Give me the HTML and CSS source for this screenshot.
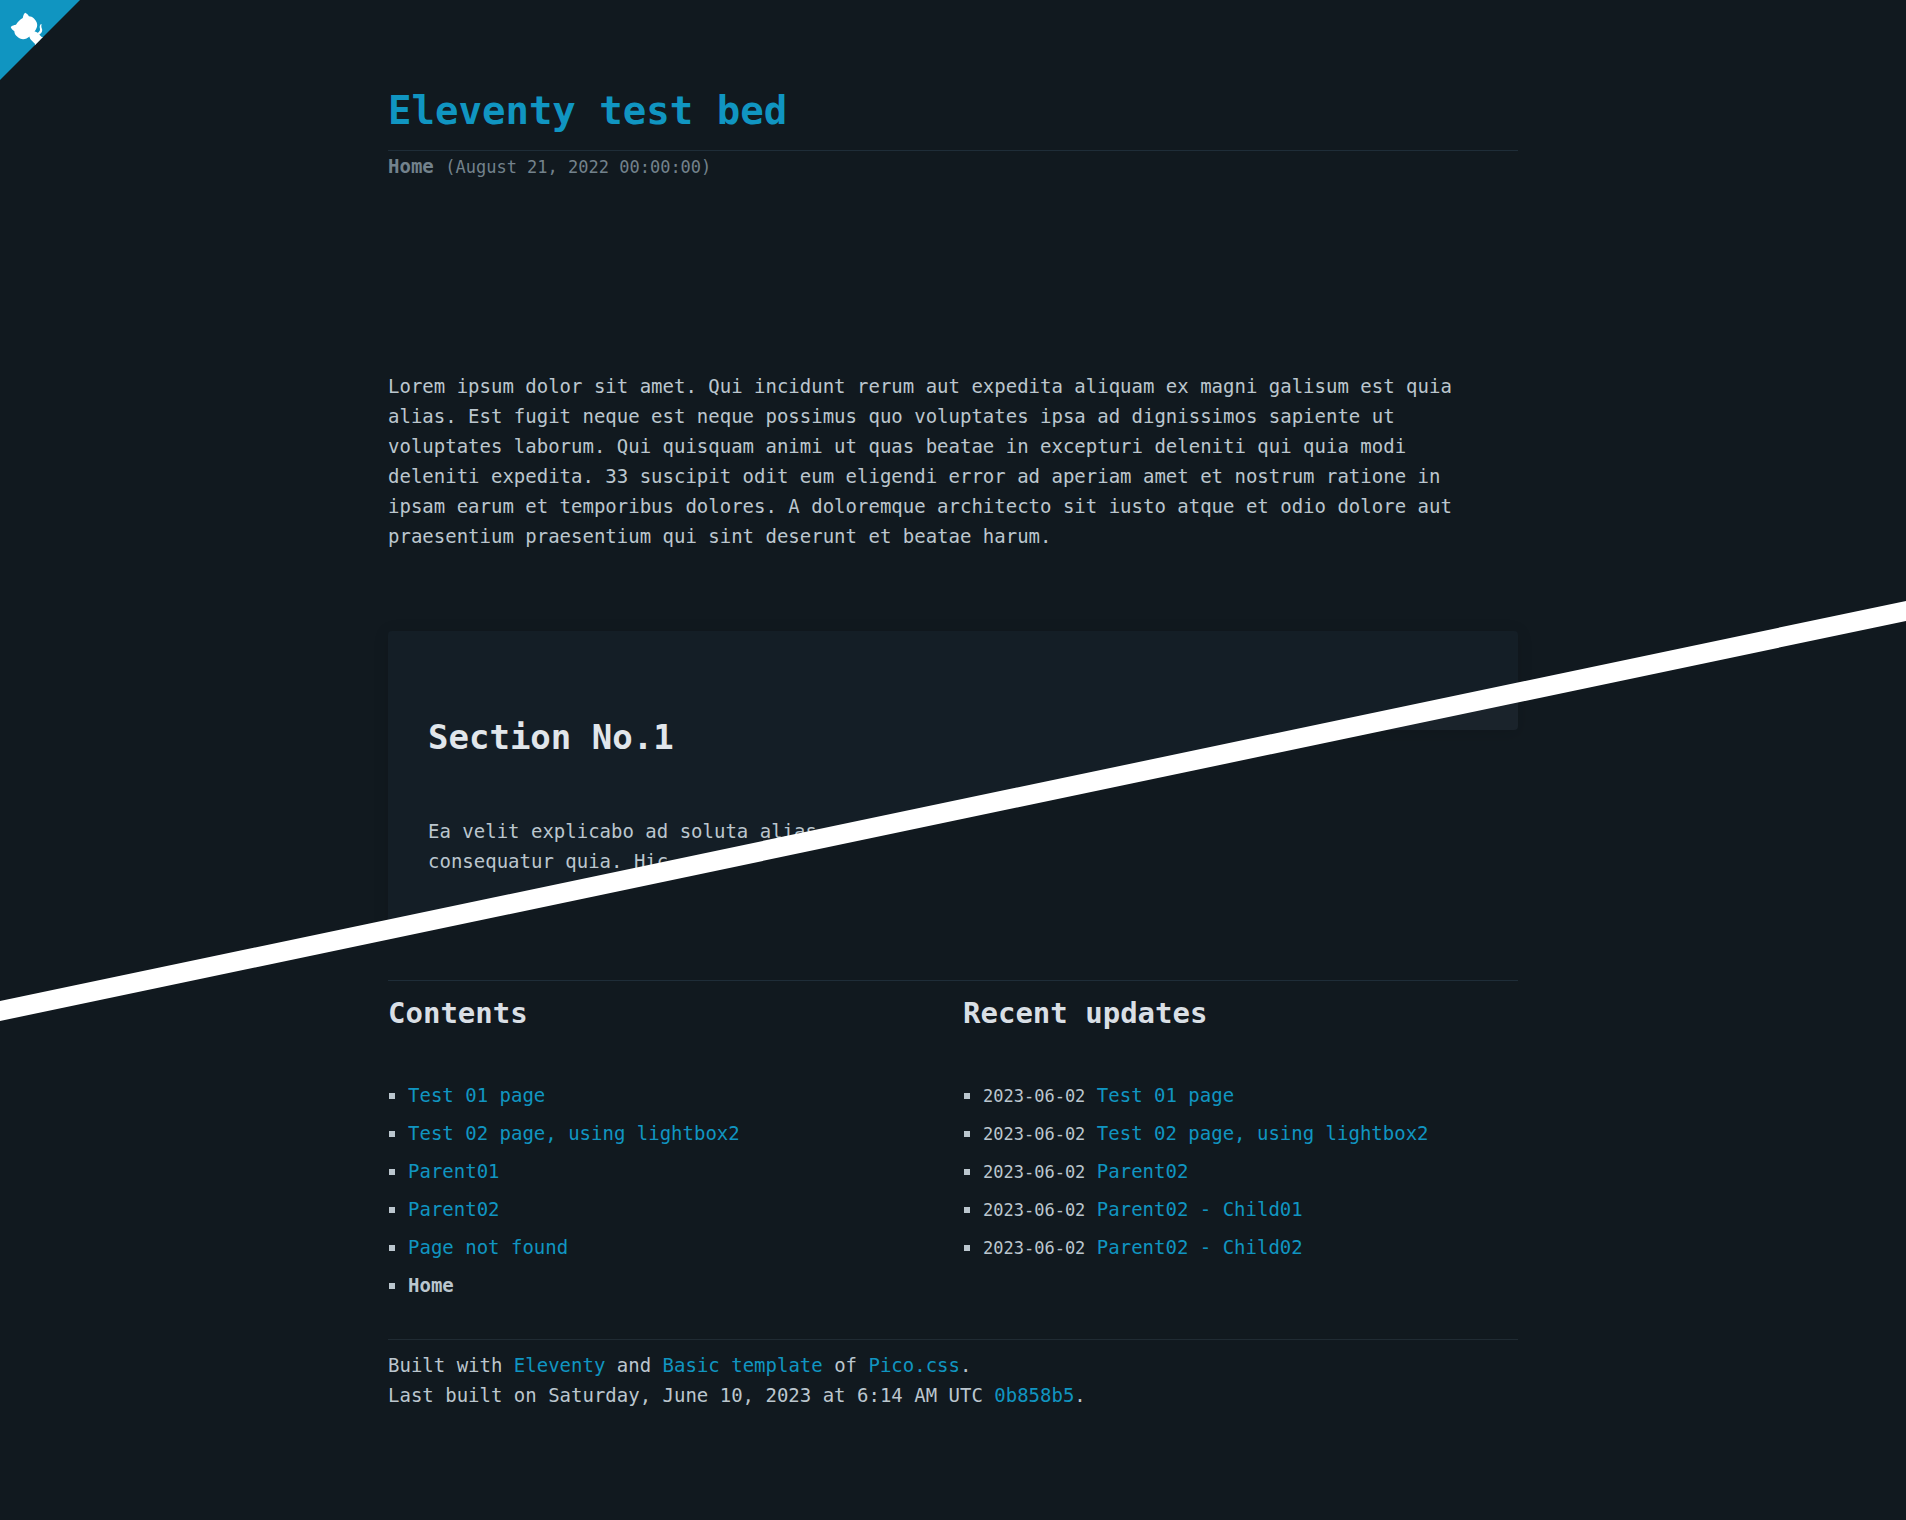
FILE: index.html
```html
<!DOCTYPE html>
<html lang="en">
<head>
<meta charset="utf-8">
<meta name="viewport" content="width=device-width, initial-scale=1">
<title>Eleventy test bed</title>
<link rel="stylesheet" href="styles.css">
</head>
<body>
<a class="corner" href="#" aria-label="View source on GitHub">
  <svg width="80" height="80" viewBox="0 0 250 250" aria-hidden="true">
    <g transform="translate(250 0) scale(-1 1)">
      <path fill="#1095c1" d="M0,0 L250,250 L250,0 Z"/>
      <path fill="#fff" d="M128.3,109.0 C113.8,99.7 119.0,89.6 119.0,89.6 C122.0,82.7 120.5,78.6 120.5,78.6 C119.2,72.0 123.4,76.3 123.4,76.3 C127.3,80.9 125.5,87.3 125.5,87.3 C122.9,97.6 130.6,101.9 134.4,103.2"/>
      <path fill="#fff" d="M115.0,115.0 C114.9,115.1 118.7,116.5 119.8,115.4 L133.7,101.6 C136.9,99.2 139.9,98.4 142.2,98.6 C133.8,88.0 127.5,74.4 143.8,58.0 C148.5,53.4 154.0,51.2 159.7,51.0 C160.3,49.4 163.2,43.6 171.4,40.1 C171.4,40.1 176.1,42.5 178.8,56.2 C183.1,58.6 187.2,61.8 190.9,65.4 C194.5,69.0 197.7,73.2 200.1,77.6 C213.8,80.2 216.3,84.9 216.3,84.9 C212.7,93.1 206.9,96.0 205.4,96.6 C205.1,102.4 203.0,107.8 198.3,112.5 C181.9,128.9 168.3,122.5 157.7,114.1 C157.9,116.9 156.7,120.9 152.7,124.9 L141.0,136.5 C139.8,137.7 141.6,141.9 141.8,141.8 Z"/>
    </g>
  </svg>
</a>

<!-- Diagonal cut between the top and the bottom of the page -->
<svg class="cut" viewBox="0 0 1906 420" preserveAspectRatio="none" aria-hidden="true">
  <defs>
    <clipPath id="below">
      <polygon points="0,410 1906,10 1906,420 0,420"/>
    </clipPath>
    <filter id="soft" x="-20%" y="-50%" width="140%" height="200%">
      <feGaussianBlur stdDeviation="8"/>
    </filter>
  </defs>
  <g clip-path="url(#below)">
    <rect fill="#11191f" width="1906" height="420"/>
    <rect fill="#000" fill-opacity="0.12" filter="url(#soft)" x="1100" y="0" width="418" height="132"/>
    <path fill="#1a232b" d="M1100,0 H1518 V125 Q1518,129 1514,129 H1100 Z"/>
  </g>
  <polygon fill="#fff" points="0,400 1906,0 1906,20 0,420"/>
</svg>

<div class="container">
  <header>
    <h1><a href="#">Eleventy test bed</a></h1>
    <p class="crumb"><strong>Home</strong> <small>(August 21, 2022 00:00:00)</small></p>
  </header>

  <main>
    <p class="intro">Lorem ipsum dolor sit amet. Qui incidunt rerum aut expedita aliquam ex magni galisum est quia alias. Est fugit neque est neque possimus quo voluptates ipsa ad dignissimos sapiente ut voluptates laborum. Qui quisquam animi ut quas beatae in excepturi deleniti qui quia modi deleniti expedita. 33 suscipit odit eum eligendi error ad aperiam amet et nostrum ratione in ipsam earum et temporibus dolores. A doloremque architecto sit iusto atque et odio dolore aut praesentium praesentium qui sint deserunt et beatae harum.</p>
    <article class="card">
      <h2>Section No.1</h2>
      <p>Ea velit explicabo ad soluta alias<br>consequatur quia. Hic</p>
    </article>
  </main>

  <nav class="lists">
    <section>
      <h3>Contents</h3>
      <ul>
        <li><a href="#">Test 01 page</a></li>
        <li><a href="#">Test 02 page, using lightbox2</a></li>
        <li><a href="#">Parent01</a></li>
        <li><a href="#">Parent02</a></li>
        <li><a href="#">Page not found</a></li>
        <li><strong>Home</strong></li>
      </ul>
    </section>
    <section>
      <h3>Recent updates</h3>
      <ul>
        <li><small>2023-06-02</small> <a href="#">Test 01 page</a></li>
        <li><small>2023-06-02</small> <a href="#">Test 02 page, using lightbox2</a></li>
        <li><small>2023-06-02</small> <a href="#">Parent02</a></li>
        <li><small>2023-06-02</small> <a href="#">Parent02 - Child01</a></li>
        <li><small>2023-06-02</small> <a href="#">Parent02 - Child02</a></li>
      </ul>
    </section>
  </nav>

  <footer>
    Built with <a href="#">Eleventy</a> and <a href="#">Basic template</a> of <a href="#">Pico.css</a>.<br>
    Last built on Saturday, June 10, 2023 at 6:14 AM UTC <a href="#">0b858b5</a>.
  </footer>
</div>
</body>
</html>
```
FILE: styles.css
```css
* {
  box-sizing: border-box;
}

body {
  position: relative;
  margin: 0;
  background: #11191f;
  color: #bbc6ce;
  font-family: "DejaVu Sans Mono", "Liberation Mono", monospace;
  font-size: 19px;
  line-height: 30px;
}

h1, h2, h3, p, ul {
  margin: 0;
}

a {
  color: #1095c1;
  text-decoration: none;
}

small {
  font-size: 17px;
  line-height: 20px;
}

.corner {
  position: absolute;
  top: 0;
  left: 0;
  line-height: 0;
}

.cut {
  position: absolute;
  top: 601px;
  left: 0;
  width: 100%;
  height: 420px;
}

.container {
  max-width: 1130px;
  margin: 0 auto;
  padding: 86px 0 104px;
}

h1 {
  padding-bottom: 15px;
  border-bottom: 1px solid #1f2d38;
  font-size: 39px;
  line-height: 49px;
}

.crumb {
  color: #73828c;
}

.intro {
  max-width: 97ch;
  margin-top: 190px;
}

.card {
  height: 320px;
  margin-top: 80px;
  padding: 85px 40px 40px;
  border-radius: 4px;
  background: #141e26;
  box-shadow: 0 2px 16px rgba(0, 0, 0, 0.12);
}

.card h2 {
  margin-bottom: 58px;
  color: #e1e6eb;
  font-size: 34px;
  line-height: 42px;
}

.lists {
  position: relative;
  display: grid;
  grid-template-columns: 1fr 1fr;
  gap: 20px;
  margin-top: 29px;
  padding-top: 14px;
  border-top: 1px solid #1f2d38;
}

.lists h3 {
  margin-bottom: 49px;
  color: #d9dfe5;
  font-size: 29px;
  line-height: 36px;
}

.lists ul {
  padding: 0;
  list-style: none;
}

.lists li {
  margin-bottom: 8px;
}

.lists li::before {
  content: "";
  display: inline-block;
  width: 6px;
  height: 6px;
  margin: 0 13px 0 1px;
  background: #bbc6ce;
  vertical-align: 3px;
}

footer {
  position: relative;
  margin-top: 31px;
  padding-top: 10px;
  border-top: 1px solid #202b33;
}
```
